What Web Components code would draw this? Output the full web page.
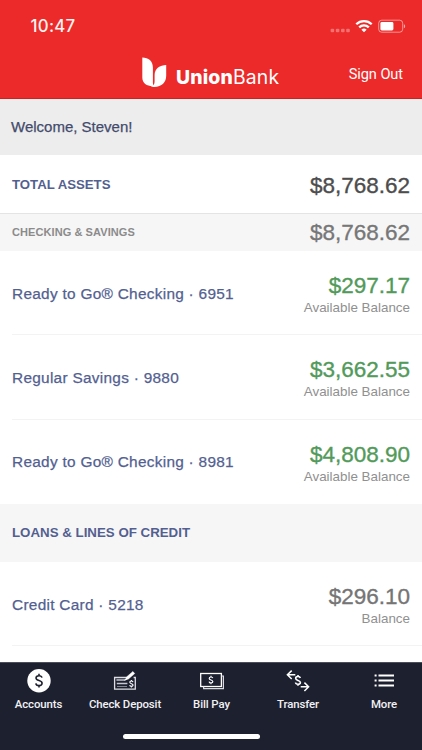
<!DOCTYPE html>
<html lang="en">
<head>
<meta charset="utf-8">
<meta name="viewport" content="width=device-width, initial-scale=1">
<title>UnionBank</title>
<style>
  html,body{margin:0;height:100%}
  body{background:#fff;overflow:hidden;font-family:"Liberation Sans",Arial,sans-serif}
</style>
</head>
<body>
<bank-app>
  <bank-header slot="header" time="10:47"></bank-header>
  <welcome-bar>Welcome, Steven!</welcome-bar>
  <section-total amount="$8,768.62">TOTAL ASSETS</section-total>
  <section-total kind="sub" amount="$8,768.62">CHECKING &amp; SAVINGS</section-total>
  <account-row amount="$297.17" note="Available Balance" positive>Ready to Go® Checking · 6951</account-row>
  <account-row amount="$3,662.55" note="Available Balance" positive>Regular Savings · 9880</account-row>
  <account-row amount="$4,808.90" note="Available Balance" positive last>Ready to Go® Checking · 8981</account-row>
  <section-total kind="group">LOANS &amp; LINES OF CREDIT</section-total>
  <account-row amount="$296.10" note="Balance">Credit Card · 5218</account-row>
  <tab-bar slot="footer">
    <tab-item icon="accounts">Accounts</tab-item>
    <tab-item icon="deposit">Check Deposit</tab-item>
    <tab-item icon="bill">Bill Pay</tab-item>
    <tab-item icon="transfer">Transfer</tab-item>
    <tab-item icon="more">More</tab-item>
  </tab-bar>
</bank-app>

<script>
class BankApp extends HTMLElement {
  constructor() { super(); this.attachShadow({ mode: "open" }); }
  connectedCallback() {
    this.shadowRoot.innerHTML = `
      <style>
        :host{display:flex;flex-direction:column;height:750px;background:#fff}
        main{flex:1;min-height:0;overflow:hidden}
      </style>
      <slot name="header"></slot>
      <main><slot></slot></main>
      <slot name="footer"></slot>`;
  }
}

// Status bar plus the logo row.
class BankHeader extends HTMLElement {
  constructor() { super(); this.attachShadow({ mode: "open" }); }
  connectedCallback() {
    this.shadowRoot.innerHTML = `
      <style>
        *{box-sizing:border-box}
        :host{display:block;box-sizing:border-box;height:99px;background:#ec2a2a;border-bottom:1px solid #b92a2c;color:#fff}
        .status{display:flex;justify-content:space-between;height:52px;padding:0 16px 0 30.5px}
        .time{font:500 16.8px/52px Inter,sans-serif;letter-spacing:.3px;color:#fff2f0}
        .status svg{display:block}
        .bar{display:flex;justify-content:space-between;height:46px;padding:0 19px 0 142px}
        .logo{display:flex}
        .logo svg{display:block}
        .name{font:400 19.4px/50px Inter,sans-serif;letter-spacing:.15px;margin-left:9px}
        .name b{font-weight:800}
        .out{font:400 14.6px/45px Roboto,sans-serif;letter-spacing:-.08px}
      </style>
      <div class="status">
        <span class="time">${this.getAttribute("time")}</span>
        <svg width="76" height="52" viewBox="330 0 76 52">
          <g fill="#fff" opacity=".33">
            <rect x="330.6" y="28.8" width="3.6" height="3.4" rx="1"/><rect x="335.8" y="28.8" width="3.6" height="3.4" rx="1"/>
            <rect x="341" y="28.8" width="3.6" height="3.4" rx="1"/><rect x="346.2" y="28.8" width="3.6" height="3.4" rx="1"/>
          </g>
          <g fill="none" stroke="#fff" stroke-width="2.3">
            <path d="M356.3 24.3A11 11 0 0 1 371.7 24.3"/>
            <path d="M359.2 27.4A6.8 6.8 0 0 1 368.8 27.4"/>
          </g>
          <path d="M361.4 29.7A3.8 3.8 0 0 1 366.6 29.7L364 32.3Z" fill="#fff"/>
          <rect x="378.7" y="20.2" width="24" height="12" rx="3" fill="none" stroke="#fff" stroke-opacity=".5"/>
          <rect x="380.4" y="22" width="13" height="8.4" rx="1.4" fill="#fff"/>
          <path d="M403.9 24.2C405.6 25 405.6 27.4 403.9 28.2Z" fill="#fff" opacity=".6"/>
        </svg>
      </div>
      <div class="bar">
        <div class="logo">
          <svg width="25" height="46" viewBox="142 52 25 46" fill="#fff">
            <path d="M142.3 57.4C148.5 57.4 152.9 61 152.9 67.5V82.2C152.9 84 153.4 85.2 154.2 86C147.8 86.6 142.3 84 142.3 77.5Z"/>
            <path d="M166.2 65V75.5C166.2 82.3 162 86.9 154.2 87C152.6 87 151.4 86.6 150.6 86.2C154.2 86.4 154.6 83.4 154.6 80.5V75C154.6 68.4 160 65 166.2 65Z"/>
          </svg>
          <span class="name"><b>Union</b>Bank</span>
        </div>
        <span class="out">Sign Out</span>
      </div>`;
  }
}

class WelcomeBar extends HTMLElement {
  constructor() { super(); this.attachShadow({ mode: "open" }); }
  connectedCallback() {
    this.shadowRoot.innerHTML = `
      <style>
        :host{display:block;box-sizing:border-box;height:56px;padding-left:11px;background:#ededed;border-top:1px solid #fbe3e0;
          font-size:15px;line-height:53px;color:#434b6c;-webkit-text-stroke:.25px #434b6c}
      </style>
      <slot></slot>`;
  }
}

// Heading line of a group; kind is empty (grand total), "sub" or "group".
class SectionTotal extends HTMLElement {
  constructor() { super(); this.attachShadow({ mode: "open" }); }
  connectedCallback() {
    this.shadowRoot.innerHTML = `
      <style>
        :host{display:flex;box-sizing:border-box;align-items:center;justify-content:space-between;height:58px;padding:1px 12px 0 12px;
          font-weight:700;font-size:13.2px;color:#535f91}
        :host([kind=sub]){height:38px;background:#f6f6f6;border-top:1px solid #e4e4e4;font-size:11px;letter-spacing:.08px;color:#8b8b8b;padding-top:0}
        :host([kind=group]){background:#f6f6f6;font-size:13.3px;padding-top:0}
        :host([kind=sub]) .label{padding-bottom:2px}
        .amt{font-weight:400;font-size:22.5px;letter-spacing:0;color:#4d4d4d;-webkit-text-stroke:.35px #4d4d4d;padding-top:2px}
        :host([kind=sub]) .amt{color:#777;-webkit-text-stroke-color:#777;padding-top:0}
      </style>
      <span class="label"><slot></slot></span>
      ${this.hasAttribute("amount") ? `<span class="amt">${this.getAttribute("amount")}</span>` : ""}`;
  }
}

class AccountRow extends HTMLElement {
  constructor() { super(); this.attachShadow({ mode: "open" }); }
  connectedCallback() {
    this.shadowRoot.innerHTML = `
      <style>
        :host{display:block;padding-left:12px;--amt:#757575}
        :host([positive]){--amt:#529a5a}
        .row{display:flex;box-sizing:border-box;align-items:center;justify-content:space-between;height:84.3px;padding-right:12px;border-bottom:1px solid #f3f3f3}
        :host([last]) .row{border-color:transparent}
        .name{font-size:15.4px;letter-spacing:.28px;color:#535f91;-webkit-text-stroke:.25px #535f91;padding-top:2px}
        .bal{text-align:right;padding-top:5.6px}
        .amt{font-size:22.5px;line-height:24px;color:var(--amt);-webkit-text-stroke:.35px var(--amt)}
        .note{font-size:13.4px;line-height:19px;color:#909090}
      </style>
      <div class="row">
        <span class="name"><slot></slot></span>
        <div class="bal">
          <div class="amt">${this.getAttribute("amount")}</div>
          <div class="note">${this.getAttribute("note")}</div>
        </div>
      </div>`;
  }
}

class TabBar extends HTMLElement {
  constructor() { super(); this.attachShadow({ mode: "open" }); }
  connectedCallback() {
    this.shadowRoot.innerHTML = `
      <style>
        :host{display:flex;box-sizing:border-box;flex-direction:column;height:88px;background:#1d202f;border-top:1px solid #4b4e5a}
        nav{display:grid;grid-template-columns:77px 96px 77px 96px 76px;height:71px}
        .home{align-self:center;width:137px;height:5px;margin-left:-39px;border-radius:3px;background:#fff}
      </style>
      <nav><slot></slot></nav>
      <div class="home"></div>`;
  }
}

const DOLLAR = `<path d="M3.2 -3.2C2.8 -4.8 1.6 -5.3 0 -5.3C-1.9 -5.3 -3.2 -4.4 -3.2 -2.8C-3.2 .7 3.3 -.7 3.3 2.8C3.3 4.4 1.9 5.3 0 5.3C-1.8 5.3 -3.2 4.6 -3.4 2.9M0 -7.4V-5.3M0 5.3V7.4"/>`;
// All icons share a 36x32 box.
const ICONS = {
  accounts: `<circle cx="18" cy="17.8" r="11.7" fill="#fff" stroke="none"/>
    <g transform="translate(18 17.6) scale(.93)" stroke="#1d202f" stroke-width="1.7">${DOLLAR}</g>`,
  deposit: `<path d="M22 14.5H7.6V26.2H28.3V14.5H26.6" stroke="#dddee4" stroke-width="1.3"/>
    <path d="M9.4 17H18M9.8 20.5H20.4" stroke="#c6c7cf" stroke-width="1.3"/>
    <path d="M10 23.5H20" stroke="#82848f" stroke-width="1"/>
    <g transform="translate(24.4 20.7) scale(.5)" stroke-width="2.2">${DOLLAR}</g>
    <path d="M18.6 16.8L19.6 13.9L25.9 8.5L27.7 10.6L21.4 16Z" fill="#fff" stroke="#fff" stroke-width=".5"/>
    <path d="M17.6 17.4L20 15.5" stroke-width="1.2"/>`,
  bill: `<rect x="6.7" y="10.5" width="20.7" height="13" stroke-width="1.3"/>
    <path d="M27.4 13H29.4V25.7H9.6V23.5" stroke-width="1.2" stroke="#d8d9df"/>
    <g transform="translate(17 17) scale(.56)" stroke-width="2.1">${DOLLAR}</g>`,
  transfer: `<g transform="translate(18 17.4) scale(.73)" stroke-width="2.2">${DOLLAR}</g>
    <path d="M11.7 7.6L7.4 11.8L11.7 16M7.6 11.8H15.3M24.4 19.6L28.6 23.8L24.4 28M28.4 23.8H20.7" stroke-width="1.5"/>`,
  more: `<path d="M12.5 12.5H28M12.5 17.5H28M12.5 22.5H28" stroke-width="2.1"/>
    <path d="M8.6 12.5H10.6M8.6 17.5H10.6M8.6 22.5H10.6" stroke-width="2.1"/>`
};

class TabItem extends HTMLElement {
  constructor() { super(); this.attachShadow({ mode: "open" }); }
  connectedCallback() {
    this.shadowRoot.innerHTML = `
      <style>
        :host{display:flex;flex-direction:column;align-items:center;color:#f1f1f4;white-space:nowrap}
        svg{display:block}
        span{font:500 11.4px/18px Roboto,sans-serif;letter-spacing:-.1px}
      </style>
      <svg width="36" height="32" viewBox="0 0 36 32" fill="none" stroke="#fff">${ICONS[this.getAttribute("icon")]}</svg>
      <span><slot></slot></span>`;
  }
}

customElements.define("bank-app", BankApp);
customElements.define("bank-header", BankHeader);
customElements.define("welcome-bar", WelcomeBar);
customElements.define("section-total", SectionTotal);
customElements.define("account-row", AccountRow);
customElements.define("tab-bar", TabBar);
customElements.define("tab-item", TabItem);
</script>
</body>
</html>
